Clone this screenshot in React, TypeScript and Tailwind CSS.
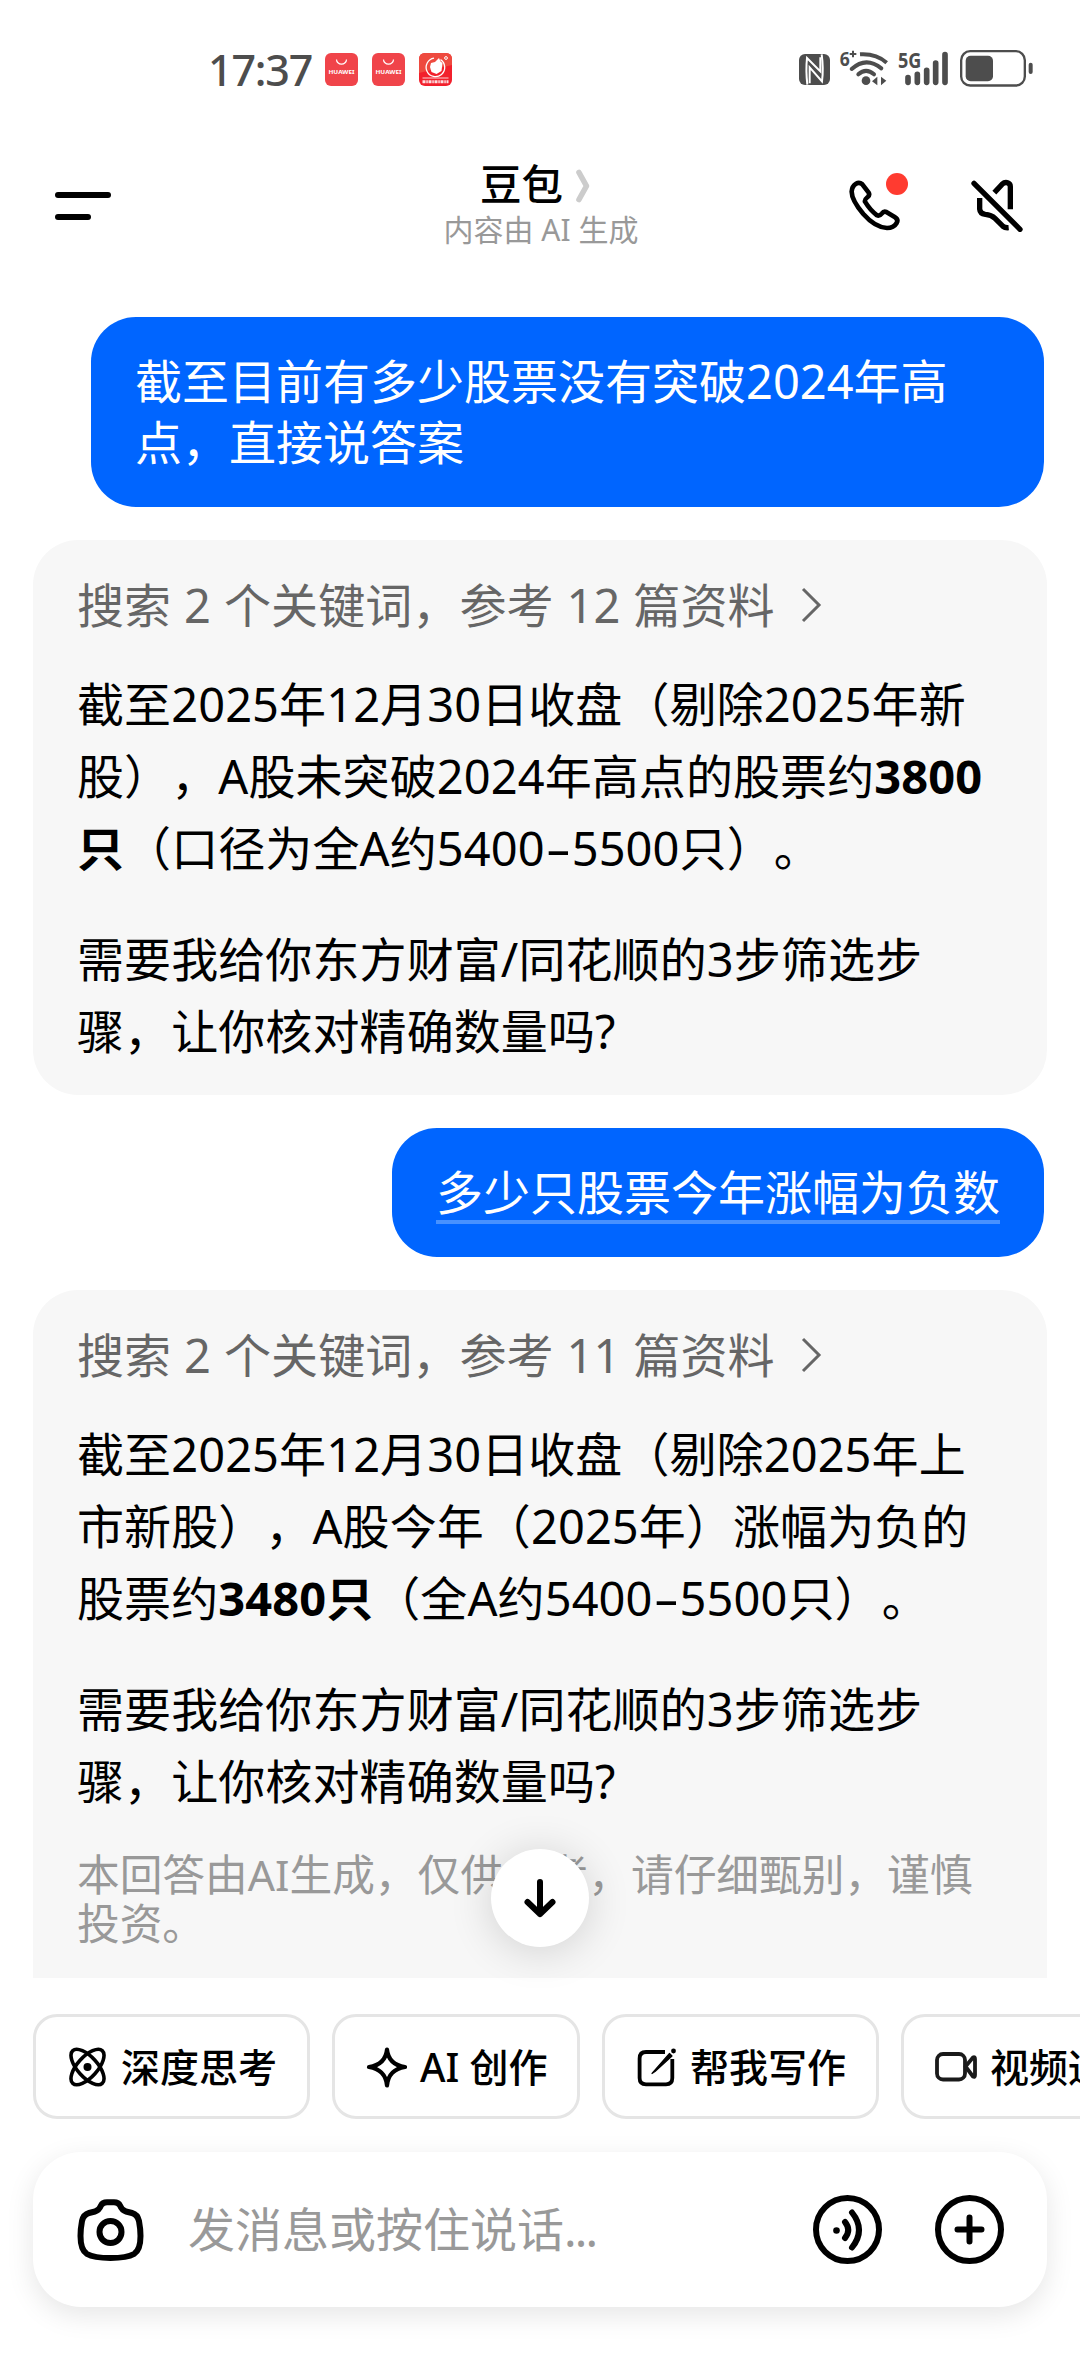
import type { ReactNode } from "react";

const FONT = "font-['Noto_Sans','Noto_Sans_CJK_SC',sans-serif]";

function StoreIcon() {
  return (
    <svg className="w-[33px] h-[33px]" viewBox="0 0 33 33">
      <rect width="33" height="33" rx="6" fill="#f0444a" />
      <path d="M11.5 6.5a5 4.6 0 0 0 10 0" fill="none" stroke="#fff" strokeWidth="1.2" />
      <text x="16.5" y="21" textAnchor="middle" textLength="26" lengthAdjust="spacingAndGlyphs" fontSize="6" fontWeight="700" fill="#fff">
        HUAWEI
      </text>
    </svg>
  );
}

function FruitAppIcon() {
  return (
    <svg className="w-[33px] h-[33px]" viewBox="0 0 33 33">
      <rect width="33" height="33" rx="6" fill="#f2202c" />
      <path d="M0 6Q0 0 6 0H27Q33 0 33 6V12L0 20Z" fill="#ee4a3f" />
      <path d="M21.5 6.6A9.3 9.3 0 1 1 15 5.2" fill="none" stroke="#fff" strokeWidth="1.3" />
      <path d="M16 9l4-4 1.5 3.5 2 1.5-1 8-5 3-5-2-1.5-5 1-4z" fill="#fff" />
      <circle cx="27" cy="5" r="1.4" fill="none" stroke="#fff" strokeWidth="1" />
      <path d="M3.5 25H29.5" stroke="#fff" strokeWidth="0.8" />
      <path d="M3.5 28.8H29.5" stroke="#fff" strokeWidth="3" strokeDasharray="3 0.8 1.5 0.7" opacity="0.85" />
    </svg>
  );
}

function NfcIcon() {
  return (
    <svg className="w-[33px] h-[39px]" viewBox="54 57 99 117">
      <rect x="57" y="72" width="93" height="93" rx="18" fill="#4d4d4d" />
      <g fill="none" stroke="#fff" strokeWidth="6">
        <path d="M82 164Q77 120 81 84L121 124V82" />
        <path d="M125 73Q131 115 126 154L89 112V160" />
      </g>
    </svg>
  );
}

function WifiIcon() {
  return (
    <svg className="w-[50px] h-[39px] overflow-visible" viewBox="177 57 150 117">
      <g fill="none" stroke="#4d4d4d" strokeWidth="12">
        <path d="M240 73Q288 70 320 98" />
        <path d="M215 117Q258 78 304 115" strokeLinecap="round" />
        <path d="M235 133Q258 112 282 133" strokeLinecap="round" />
      </g>
      <circle cx="258" cy="152" r="13" fill="#4d4d4d" />
      <path d="M292 140V166L276 154ZM303 140V166L319 152Z" fill="#4d4d4d" />
      <text x="179" y="107" fontSize="60" fontWeight="700" fill="#4d4d4d" textLength="30" lengthAdjust="spacingAndGlyphs">6</text>
      <path d="M209 72H229M219 62V82" stroke="#4d4d4d" strokeWidth="6" />
    </svg>
  );
}

function SignalIcon() {
  return (
    <svg className="w-[52px] h-[39px] overflow-visible" viewBox="351 57 156 117">
      <text x="354" y="113" fontSize="62" fontWeight="700" fill="#4d4d4d" textLength="70" lengthAdjust="spacingAndGlyphs">5G</text>
      <path d="M384 143V157M412 133V157M440 121V157M467 99V157M495 74V157" stroke="#4d4d4d" strokeWidth="17" strokeLinecap="round" />
    </svg>
  );
}

function BatteryIcon() {
  return (
    <svg className="w-[75px] h-[39px]" viewBox="537 57 225 117">
      <rect x="543.5" y="63.5" width="191" height="103" rx="27" fill="none" stroke="#4d4d4d" strokeWidth="7" />
      <rect x="557" y="77" width="82" height="77" rx="15" fill="#4d4d4d" />
      <rect x="746" y="98" width="12" height="34" rx="6" fill="#4d4d4d" />
    </svg>
  );
}

function StatusBar() {
  return (
    <div className="h-[140px] flex items-start justify-between pl-[208px] pr-[46px] shrink-0">
      <div className="flex items-center mt-[49px] h-[41px]">
        <span className="w-[117px] text-[43px] leading-[41px] font-medium tracking-[-1.2px] text-[#4d4d4d]">17:37</span>
        <div className="flex gap-[14px]">
          <StoreIcon />
          <StoreIcon />
          <FruitAppIcon />
        </div>
      </div>
      <div className="flex gap-2 mt-[49px]">
        <NfcIcon />
        <WifiIcon />
        <SignalIcon />
        <div className="ml-[2px]">
          <BatteryIcon />
        </div>
      </div>
    </div>
  );
}

function Header() {
  return (
    <div className="h-[177px] grid grid-cols-3 shrink-0">
      <div className="pl-[55px] pt-[52px] flex flex-col gap-4">
        <div className="w-[56px] h-[6px] rounded-full bg-black" />
        <div className="w-[36px] h-[6px] rounded-full bg-black" />
      </div>
      <div className="pt-[19px] flex flex-col items-center">
        <div className="flex items-center h-[50px] ml-[-9px]">
          <span className="text-[41.500px] leading-[50px] font-medium">豆包</span>
          <svg className="w-[16px] h-[36px] ml-[12px] mt-[4px]" viewBox="0 0 16 36">
            <path d="M4 4.5L11.5 18L4 31.5" fill="none" stroke="#ccc" strokeWidth="5.6" strokeLinecap="round" strokeLinejoin="round" />
          </svg>
        </div>
        <span className="mt-px ml-[2px] text-[30px] leading-[40px] text-[#999]">内容由 AI 生成</span>
      </div>
      <div className="flex justify-end gap-[69px] pr-[56px] pt-[38px]">
        <div className="relative w-[54px] h-[54px]">
          <svg className="w-[54px] h-[54px]" viewBox="81 84 162 162">
            <path
              d="M108 101Q118 95 127 103L146 128Q150 135 143 141Q133 149 135 155Q150 180 171 196Q178 200 186 190Q191 183 199 186L224 201Q236 208 230 219Q221 234 201 234Q165 232 130 192Q95 150 95 125Q96 108 108 101Z"
              fill="none"
              stroke="#000"
              strokeWidth="14"
              strokeLinejoin="round"
            />
          </svg>
          <div className="absolute left-[39px] top-[-5px] w-[22px] h-[22px] rounded-full bg-[#ff3b30]" />
        </div>
        <svg className="w-[54px] h-[54px]" viewBox="450 87 162 162" fill="none" stroke="#000" strokeWidth="16">
          <path d="M462 103L600 241" strokeLinecap="round" />
          <path d="M523 131L546 106Q555 98 564 102Q571 105 571 113V181" />
          <path d="M479 147V180Q480 194 496 196Q514 197 525 208L549 232Q555 237 566 236" />
        </svg>
      </div>
    </div>
  );
}

function UserBubble({ children }: { children: ReactNode }) {
  return (
    <div className="self-end mr-[3px] rounded-[45px] bg-[#0065ff] px-[44px] py-[34px] text-[47px] leading-[61px] text-white whitespace-nowrap">
      {children}
    </div>
  );
}

function SearchRow({ count }: { count: number }) {
  return (
    <div className="flex items-center h-[61px] text-[47px] leading-[61px] text-[#666] whitespace-nowrap">
      <span className="mt-[2px] [word-spacing:0.6px]">搜索 2 个关键词，参考 {count} 篇资料</span>
      <svg className="w-[24px] h-[38px] ml-[25px]" viewBox="0 0 24 38">
        <path d="M3 3L19 19L3 35" fill="none" stroke="#666" strokeWidth="3" />
      </svg>
    </div>
  );
}

// wide hyphen between two figures
function Dash() {
  return <span className="inline-block w-[27px] text-center scale-x-170">-</span>;
}

function FollowUp() {
  return (
    <p className="mt-[39px]">
      需要我给你东方财富/同花顺的3步筛选步
      <br />
      骤，让你核对精确数量吗?
    </p>
  );
}

function Chip({ icon, label, className }: { icon: ReactNode; label: string; className: string }) {
  return (
    <div className={`${className} h-[105px] shrink-0 flex items-center gap-[13px] pl-[30px] border-3 border-[#e5e5e5] rounded-[24px] text-[39px] leading-[50px] font-medium whitespace-nowrap`}>
      {icon}
      <span>{label}</span>
    </div>
  );
}

const chips = [
  {
    label: "深度思考",
    className: "w-[277px]",
    icon: (
      <svg className="w-[42px] h-[42px] shrink-0" viewBox="0 0 42 42" fill="none" stroke="#000" strokeWidth="3.6">
        <ellipse cx="21.5" cy="21" rx="22" ry="10" transform="rotate(48 21.5 21)" />
        <ellipse cx="21.5" cy="21" rx="22" ry="10" transform="rotate(-48 21.5 21)" />
        <circle cx="21.5" cy="21" r="4" fill="#000" stroke="none" />
      </svg>
    ),
  },
  {
    label: "AI 创作",
    className: "w-[248px]",
    icon: (
      <svg className="w-[42px] h-[42px] shrink-0" viewBox="0 0 42 42" fill="none" stroke="#000" strokeWidth="4.2" strokeLinejoin="round">
        <path d="M22 3.5Q23.5 18.5 40 21Q23.5 23.5 22 39.5Q20.5 23.5 4 21Q20.5 18.5 22 3.5Z" />
      </svg>
    ),
  },
  {
    label: "帮我写作",
    className: "w-[277px]",
    icon: (
      <svg className="w-[42px] h-[42px] shrink-0" viewBox="0 0 42 42" fill="none" stroke="#000" strokeWidth="3.8">
        <path d="M30 6H11Q4.600 6 4.600 12.500V32Q4.600 38.300 11 38.300H31Q37.300 38.300 37.300 32V13" />
        <path d="M17 27.500L34.500 7.500L37 10L20 25.500Z" fill="#000" strokeWidth="1.200" strokeLinejoin="round" />
        <circle cx="38.500" cy="5" r="2.400" fill="#000" stroke="none" />
      </svg>
    ),
  },
  {
    label: "视频通话",
    className: "w-[277px]",
    icon: (
      <svg className="w-[43px] h-[42px] shrink-0" viewBox="0 0 43 42" fill="none" stroke="#1a1a1a" strokeWidth="3.8" strokeLinejoin="round">
        <rect x="3" y="8" width="28" height="25.500" rx="6" />
        <path d="M31.500 20.500L39 11.500Q41 10.500 41 13V29Q41 31.500 39 30.500Z" />
      </svg>
    ),
  },
];

function InputBar() {
  return (
    <div className="mx-[33px] mt-[33px] h-[155px] shrink-0 flex items-center rounded-[48px] bg-white pl-[41px] pr-[43px] shadow-[0_8px_28px_rgba(0,0,0,0.10)]">
      <svg className="w-[72px] h-[72px]" viewBox="0 0 72 72" fill="none" stroke="#000" strokeWidth="6">
        <path d="M36.5 8.200H33Q28.500 8.200 27 11.500Q25 16.500 21 17.500L15 19Q9.500 20.500 8 27Q6.500 35 6.500 42Q6.500 56 13 60Q20 64 36.500 64Q53 64 60 60Q66.500 56 66.500 42Q66.500 35 65 27Q63.500 20.500 58 19L52 17.500Q48 16.500 46 11.500Q44.500 8.200 40 8.200Z" />
        <circle cx="36.500" cy="38" r="11" />
      </svg>
      <span className="ml-[42px] flex-1 text-[47px] leading-[61px] text-[#999]">
        发消息或按住说话<span className="tracking-[-1.8px]">...</span>
      </span>
      <div className="flex gap-[53px]">
        <svg className="w-[69px] h-[69px]" viewBox="0 0 69 69" fill="none" stroke="#000" strokeWidth="6" strokeLinecap="round">
          <circle cx="34.500" cy="34.500" r="31.500" />
          <circle cx="23.500" cy="35.500" r="3.300" fill="#000" stroke="none" />
          <path d="M32 27Q38.500 35 32 43" />
          <path d="M39 17.500Q53 35 39 52.500" />
        </svg>
        <svg className="w-[69px] h-[69px]" viewBox="0 0 69 69" fill="none" stroke="#000" strokeWidth="6" strokeLinecap="round">
          <circle cx="34.500" cy="34.500" r="31.500" />
          <path d="M22.500 34.500H46.500M34.500 22.500V46.500" />
        </svg>
      </div>
    </div>
  );
}

export default function App() {
  return (
    <div className={`${FONT} w-[1080px] h-[2376px] overflow-hidden flex flex-col bg-white text-black [text-spacing-trim:space-all]`}>
      <StatusBar />
      <Header />

      <div className="relative h-[1661px] shrink-0 flex flex-col gap-[33px] px-[33px]">
        <UserBubble>
          <div className="w-[865px]">
            截至目前有多少股票没有突破2024年高
            <br />
            点，直接说答案
          </div>
        </UserBubble>

        <div className="h-[555px] shrink-0 rounded-[45px] bg-[#f7f7f7] px-[44px] pt-[34px] text-[47px] leading-[72px] tracking-[0.09px] whitespace-nowrap">
          <SearchRow count={12} />
          <p className="mt-[33px]">
            截至2025年12月30日收盘（剔除2025年新
            <br />
            股），A股未突破2024年高点的股票约<b>3800</b>
            <br />
            <b>只</b>（口径为全A约5400<Dash />5500只）。
          </p>
          <FollowUp />
        </div>

        <UserBubble>
          <div className="h-[62px] -mb-px border-b-4 border-[#4791ff]">多少只股票今年涨幅为负数</div>
        </UserBubble>

        <div className="h-[688px] shrink-0 rounded-t-[45px] bg-[#f7f7f7] px-[44px] pt-[34px] text-[47px] leading-[72px] tracking-[0.09px] whitespace-nowrap">
          <SearchRow count={11} />
          <p className="mt-[33px]">
            截至2025年12月30日收盘（剔除2025年上
            <br />
            市新股），A股今年（2025年）涨幅为负的
            <br />
            股票约<b>3480只</b>（全A约5400<Dash />5500只）。
          </p>
          <FollowUp />
          <p className="mt-[33px] text-[42.700px] leading-[49px] tracking-normal text-[#999]">
            本回答由AI生成，仅供参考，请仔细甄别，谨慎
            <br />
            投资。
          </p>
        </div>

        <button className="absolute left-[491px] bottom-[31px] w-[98px] h-[98px] rounded-full bg-white flex items-center justify-center shadow-[0_4px_44px_rgba(0,0,0,0.16)]">
          <svg className="w-[40px] h-[44px]" viewBox="0 0 40 44" fill="none" stroke="#000" strokeWidth="6" strokeLinecap="round" strokeLinejoin="round">
            <path d="M20 6V38M7.500 26L20 38L32.500 26" />
          </svg>
        </button>
      </div>

      <div className="flex gap-[22px] pl-[33px] mt-[36px] shrink-0">
        {chips.map((c) => (
          <Chip key={c.label} {...c} />
        ))}
      </div>

      <InputBar />
    </div>
  );
}
